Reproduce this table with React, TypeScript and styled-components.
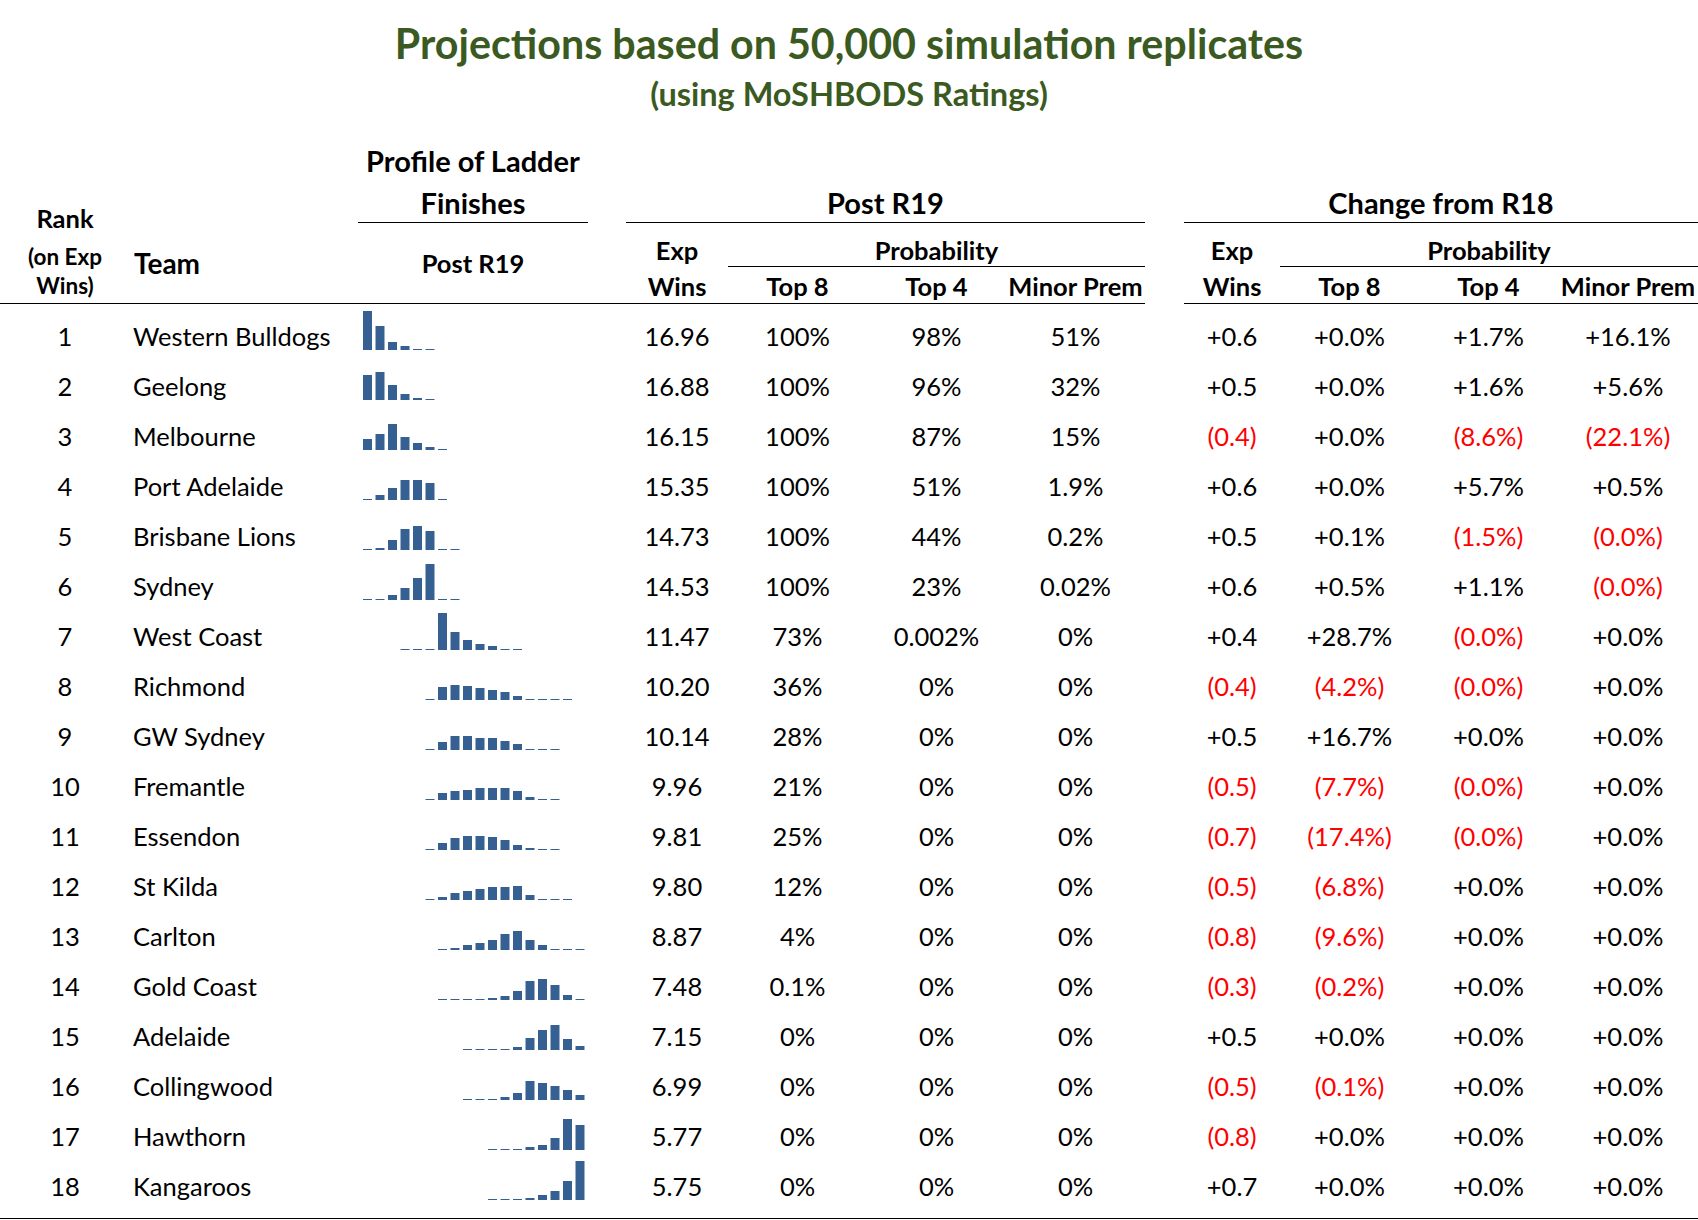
import React from "react";
import styled, { createGlobalStyle } from "styled-components";

/* ── Data ── */
interface TeamRow {
  team: string;
  exp: string;
  top8: string;
  top4: string;
  minor: string;
  dExp: string;
  dTop8: string;
  dTop4: string;
  dMinor: string;
  start: number; // first ladder slot that has a bar
  bars: number[]; // bar heights in px, 1 = hairline
}

const rows: TeamRow[] = [
  { team: "Western Bulldogs", exp: "16.96", top8: "100%", top4: "98%", minor: "51%", dExp: "+0.6", dTop8: "+0.0%", dTop4: "+1.7%", dMinor: "+16.1%", start: 0, bars: [39, 24, 8, 4, 1, 1] },
  { team: "Geelong", exp: "16.88", top8: "100%", top4: "96%", minor: "32%", dExp: "+0.5", dTop8: "+0.0%", dTop4: "+1.6%", dMinor: "+5.6%", start: 0, bars: [25, 28, 15, 6, 2, 1] },
  { team: "Melbourne", exp: "16.15", top8: "100%", top4: "87%", minor: "15%", dExp: "(0.4)", dTop8: "+0.0%", dTop4: "(8.6%)", dMinor: "(22.1%)", start: 0, bars: [11, 16, 26, 13, 7, 3, 1] },
  { team: "Port Adelaide", exp: "15.35", top8: "100%", top4: "51%", minor: "1.9%", dExp: "+0.6", dTop8: "+0.0%", dTop4: "+5.7%", dMinor: "+0.5%", start: 0, bars: [1, 5, 12, 20, 20, 17, 1] },
  { team: "Brisbane Lions", exp: "14.73", top8: "100%", top4: "44%", minor: "0.2%", dExp: "+0.5", dTop8: "+0.1%", dTop4: "(1.5%)", dMinor: "(0.0%)", start: 0, bars: [1, 2, 10, 21, 24, 19, 1, 1] },
  { team: "Sydney", exp: "14.53", top8: "100%", top4: "23%", minor: "0.02%", dExp: "+0.6", dTop8: "+0.5%", dTop4: "+1.1%", dMinor: "(0.0%)", start: 0, bars: [1, 1, 5, 12, 22, 36, 1, 1] },
  { team: "West Coast", exp: "11.47", top8: "73%", top4: "0.002%", minor: "0%", dExp: "+0.4", dTop8: "+28.7%", dTop4: "(0.0%)", dMinor: "+0.0%", start: 3, bars: [1, 1, 1, 37, 18, 10, 6, 4, 1, 1] },
  { team: "Richmond", exp: "10.20", top8: "36%", top4: "0%", minor: "0%", dExp: "(0.4)", dTop8: "(4.2%)", dTop4: "(0.0%)", dMinor: "+0.0%", start: 5, bars: [1, 13, 15, 14, 12, 10, 8, 4, 1, 1, 1, 1] },
  { team: "GW Sydney", exp: "10.14", top8: "28%", top4: "0%", minor: "0%", dExp: "+0.5", dTop8: "+16.7%", dTop4: "+0.0%", dMinor: "+0.0%", start: 5, bars: [1, 8, 14, 14, 12, 12, 9, 6, 1, 1, 1] },
  { team: "Fremantle", exp: "9.96", top8: "21%", top4: "0%", minor: "0%", dExp: "(0.5)", dTop8: "(7.7%)", dTop4: "(0.0%)", dMinor: "+0.0%", start: 5, bars: [1, 7, 9, 10, 12, 12, 12, 9, 3, 1, 1] },
  { team: "Essendon", exp: "9.81", top8: "25%", top4: "0%", minor: "0%", dExp: "(0.7)", dTop8: "(17.4%)", dTop4: "(0.0%)", dMinor: "+0.0%", start: 5, bars: [1, 7, 12, 14, 14, 13, 10, 5, 2, 1, 1] },
  { team: "St Kilda", exp: "9.80", top8: "12%", top4: "0%", minor: "0%", dExp: "(0.5)", dTop8: "(6.8%)", dTop4: "+0.0%", dMinor: "+0.0%", start: 5, bars: [1, 3, 7, 9, 11, 13, 13, 14, 5, 1, 1, 1] },
  { team: "Carlton", exp: "8.87", top8: "4%", top4: "0%", minor: "0%", dExp: "(0.8)", dTop8: "(9.6%)", dTop4: "+0.0%", dMinor: "+0.0%", start: 6, bars: [1, 2, 5, 7, 10, 16, 19, 10, 5, 1, 1, 1] },
  { team: "Gold Coast", exp: "7.48", top8: "0.1%", top4: "0%", minor: "0%", dExp: "(0.3)", dTop8: "(0.2%)", dTop4: "+0.0%", dMinor: "+0.0%", start: 6, bars: [1, 1, 1, 1, 2, 4, 9, 19, 21, 15, 5, 1] },
  { team: "Adelaide", exp: "7.15", top8: "0%", top4: "0%", minor: "0%", dExp: "+0.5", dTop8: "+0.0%", dTop4: "+0.0%", dMinor: "+0.0%", start: 8, bars: [1, 1, 1, 1, 3, 12, 20, 25, 11, 4] },
  { team: "Collingwood", exp: "6.99", top8: "0%", top4: "0%", minor: "0%", dExp: "(0.5)", dTop8: "(0.1%)", dTop4: "+0.0%", dMinor: "+0.0%", start: 8, bars: [1, 1, 1, 3, 7, 19, 17, 14, 10, 5] },
  { team: "Hawthorn", exp: "5.77", top8: "0%", top4: "0%", minor: "0%", dExp: "(0.8)", dTop8: "+0.0%", dTop4: "+0.0%", dMinor: "+0.0%", start: 10, bars: [1, 1, 1, 3, 5, 12, 31, 25] },
  { team: "Kangaroos", exp: "5.75", top8: "0%", top4: "0%", minor: "0%", dExp: "+0.7", dTop8: "+0.0%", dTop4: "+0.0%", dMinor: "+0.0%", start: 10, bars: [1, 1, 1, 2, 5, 9, 19, 41] },
];

/* ── Styles ── */
const COLS =
  "130px 228px 230px 38px 102px 139px 139px 139px 39px 96px 139px 139px 140px";

const GlobalStyle = createGlobalStyle`
  html, body {
    margin: 0;
    padding: 0;
    background: #ffffff;
  }
  body {
    font-family: Lato, "Liberation Sans", sans-serif;
    color: #000000;
    overflow: hidden;
  }
`;

const Page = styled.div`
  width: 1698px;
  height: 1220px;
`;

const TitleBlock = styled.header`
  display: flex;
  flex-direction: column;
  align-items: center;
  padding-top: 20px;
  color: #3b5a22;
  font-weight: 700;
`;

const Title = styled.h1`
  margin: 0;
  font-size: 41.2px;
  line-height: 46px;
  font-weight: 700;
`;

const Subtitle = styled.h2`
  margin: 9px 0 0;
  font-size: 32.5px;
  line-height: 38px;
  font-weight: 700;
`;

const HeaderGrid = styled.div`
  display: grid;
  grid-template-columns: ${COLS};
  grid-template-rows: 43px 41px 44px 36px 1px;
  margin-top: 26px;
`;

const HeadCell = styled.div<{
  $col: string;
  $row: string;
  $size?: number;
  $rule?: boolean;
  $padTop?: number;
}>`
  grid-column: ${(p) => p.$col};
  grid-row: ${(p) => p.$row};
  display: flex;
  align-items: center;
  justify-content: center;
  box-sizing: border-box;
  padding-top: ${(p) => p.$padTop ?? 0}px;
  font-size: ${(p) => p.$size ?? 25.5}px;
  font-weight: 700;
  white-space: nowrap;
  border-bottom: ${(p) => (p.$rule ? "1px solid #000" : "none")};
`;

const RankHead = styled.div`
  grid-column: 1;
  grid-row: 2 / 5;
  display: flex;
  flex-direction: column;
  justify-content: flex-end;
  align-items: center;
  padding-bottom: 3px;
  font-weight: 700;
  text-align: center;
`;

const RankTitle = styled.div`
  font-size: 25.5px;
  line-height: 30px;
  margin-bottom: 9px;
`;

const RankNote = styled.div`
  font-size: 22.5px;
  line-height: 29px;
`;

const TeamHead = styled(HeadCell)`
  justify-content: flex-start;
  padding-left: 4px;
`;

const Rule = styled.div<{ $col: string }>`
  grid-column: ${(p) => p.$col};
  grid-row: 5;
  background: #000;
`;

const Body = styled.div`
  margin-top: 7px;
`;

const DataRow = styled.div`
  display: grid;
  grid-template-columns: ${COLS};
  height: 50px;
  align-items: center;
  font-size: 25.5px;
`;

const Cell = styled.div<{ $neg?: boolean }>`
  text-align: center;
  white-space: nowrap;
  color: ${(p) => (p.$neg ? "#ff0000" : "#000")};
`;

const TeamCell = styled.div`
  padding-left: 3px;
  white-space: nowrap;
`;

const SparkCell = styled.div`
  height: 50px;
`;

const BottomRule = styled.div`
  margin-top: 7px;
  height: 1px;
  background: #000;
`;

/* ── Sparkline ── */
const BAR = "#376092";
const PITCH = 12.5;
const BASE = 39;

const Spark = ({ start, bars }: { start: number; bars: number[] }) => (
  <svg width="230" height="50" viewBox="0 0 230 50">
    {bars.map((h, i) => (
      <rect
        key={i}
        x={5 + (start + i) * PITCH}
        y={BASE - h}
        width={9}
        height={h}
        fill={BAR}
      />
    ))}
  </svg>
);

const neg = (v: string) => v.startsWith("(");

/* ── Component ── */
export default function App() {
  return (
    <Page>
      <GlobalStyle />
      <TitleBlock>
        <Title>Projections based on 50,000 simulation replicates</Title>
        <Subtitle>(using MoSHBODS Ratings)</Subtitle>
      </TitleBlock>

      <HeaderGrid>
        <RankHead>
          <RankTitle>Rank</RankTitle>
          <RankNote>(on Exp</RankNote>
          <RankNote>Wins)</RankNote>
        </RankHead>
        <TeamHead $col="2" $row="3 / 5" $size={28}>
          Team
        </TeamHead>

        <HeadCell $col="3" $row="1" $size={29}>
          Profile of Ladder
        </HeadCell>
        <HeadCell $col="3" $row="2" $size={29} $rule>
          Finishes
        </HeadCell>
        <HeadCell $col="3" $row="3 / 5" $size={25.5}>
          Post R19
        </HeadCell>

        <HeadCell $col="5 / 9" $row="2" $size={29} $rule>
          Post R19
        </HeadCell>
        <HeadCell $col="5" $row="3" $padTop={10}>
          Exp
        </HeadCell>
        <HeadCell $col="6 / 9" $row="3" $padTop={10} $rule>
          Probability
        </HeadCell>
        <HeadCell $col="5" $row="4" $padTop={2}>
          Wins
        </HeadCell>
        <HeadCell $col="6" $row="4" $padTop={2}>
          Top 8
        </HeadCell>
        <HeadCell $col="7" $row="4" $padTop={2}>
          Top 4
        </HeadCell>
        <HeadCell $col="8" $row="4" $padTop={2}>
          Minor Prem
        </HeadCell>

        <HeadCell $col="10 / 14" $row="2" $size={29} $rule>
          Change from R18
        </HeadCell>
        <HeadCell $col="10" $row="3" $padTop={10}>
          Exp
        </HeadCell>
        <HeadCell $col="11 / 14" $row="3" $padTop={10} $rule>
          Probability
        </HeadCell>
        <HeadCell $col="10" $row="4" $padTop={2}>
          Wins
        </HeadCell>
        <HeadCell $col="11" $row="4" $padTop={2}>
          Top 8
        </HeadCell>
        <HeadCell $col="12" $row="4" $padTop={2}>
          Top 4
        </HeadCell>
        <HeadCell $col="13" $row="4" $padTop={2}>
          Minor Prem
        </HeadCell>

        <Rule $col="1 / 9" />
        <Rule $col="10 / 14" />
      </HeaderGrid>

      <Body>
        {rows.map((r, i) => (
          <DataRow key={r.team}>
            <Cell>{i + 1}</Cell>
            <TeamCell>{r.team}</TeamCell>
            <SparkCell>
              <Spark start={r.start} bars={r.bars} />
            </SparkCell>
            <div />
            <Cell>{r.exp}</Cell>
            <Cell>{r.top8}</Cell>
            <Cell>{r.top4}</Cell>
            <Cell>{r.minor}</Cell>
            <div />
            <Cell $neg={neg(r.dExp)}>{r.dExp}</Cell>
            <Cell $neg={neg(r.dTop8)}>{r.dTop8}</Cell>
            <Cell $neg={neg(r.dTop4)}>{r.dTop4}</Cell>
            <Cell $neg={neg(r.dMinor)}>{r.dMinor}</Cell>
          </DataRow>
        ))}
        <BottomRule />
      </Body>
    </Page>
  );
}
